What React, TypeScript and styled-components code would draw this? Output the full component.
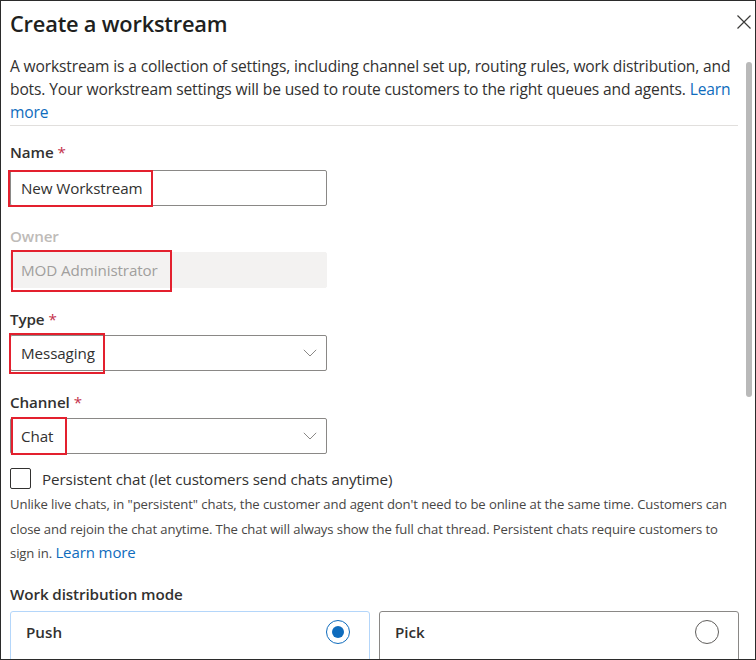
import React from "react";
import styled, { createGlobalStyle } from "styled-components";

const Global = createGlobalStyle`
  html, body { margin: 0; padding: 0; background: #fff; }
  body { font-family: "Open Sans", "Noto Sans", Arial, sans-serif; color: #323130; }
  * { box-sizing: border-box; }
`;

const Frame = styled.div`
  position: relative;
  width: 756px;
  height: 660px;
  border: 1px solid #2b2b2b;
  overflow: hidden;
  background: #fff;
`;

const Content = styled.div`
  display: flex;
  flex-direction: column;
  padding: 6px 17px 0 9px;
`;

const Header = styled.div`
  display: flex;
  align-items: center;
  justify-content: space-between;
  height: 32px;
`;

const Title = styled.h1`
  margin: 0;
  font-size: 21.8px;
  font-weight: 600;
  color: #201f1e;
  letter-spacing: -0.2px;
`;

const Close = styled.button`
  position: absolute;
  right: 3px;
  top: 13px;
  width: 16px;
  height: 16px;
  border: none;
  background: none;
  padding: 0;
  display: flex;
`;

const Desc = styled.p`
  margin: 16px 0 0;
  font-size: 15.6px;
  line-height: 23px;
  color: #323130;
  letter-spacing: -0.15px;
`;

const Link = styled.a<{ $size?: number }>`
  color: #0f6cbd;
  text-decoration: none;
  ${(p) => (p.$size ? `font-size: ${p.$size}px; line-height: 1;` : "")}
`;

const Divider = styled.hr`
  margin: 0;
  border: none;
  border-top: 1px solid #e1dfdd;
  margin-top: 1px;
`;

const Field = styled.div<{ $top: number }>`
  display: flex;
  flex-direction: column;
  margin-top: ${(p) => p.$top}px;
`;

const Label = styled.label<{ $disabled?: boolean; $gap?: number }>`
  font-size: 15.2px;
  line-height: 20px;
  font-weight: 600;
  color: ${(p) => (p.$disabled ? "#bebbb8" : "#323130")};
  margin-bottom: ${(p) => p.$gap ?? 6}px;
  letter-spacing: -0.1px;
`;

const Req = styled.span`
  color: #c4314b;
  font-weight: 400;
  margin-left: 4px;
`;

const Box = styled.div<{ $disabled?: boolean }>`
  position: relative;
  width: 317px;
  height: 36px;
  border: 1px solid ${(p) => (p.$disabled ? "#f3f2f1" : "#8a8886")};
  background: ${(p) => (p.$disabled ? "#f3f2f1" : "#fff")};
  border-radius: 2px;
  display: flex;
  align-items: center;
  justify-content: space-between;
  padding: 0 8px 0 10px;
  font-size: 15.2px;
  color: ${(p) => (p.$disabled ? "#a19f9d" : "#323130")};
  letter-spacing: -0.1px;
`;

const Highlight = styled.div<{ $l: number; $t: number; $w: number; $h: number }>`
  position: absolute;
  left: ${(p) => p.$l}px;
  top: ${(p) => p.$t}px;
  width: ${(p) => p.$w}px;
  height: ${(p) => p.$h}px;
  border: 2px solid #e3202e;
  pointer-events: none;
`;

const CheckRow = styled.div`
  display: flex;
  align-items: center;
  gap: 11px;
  margin-top: 14px;
`;

const CheckBox = styled.span`
  width: 21px;
  height: 21px;
  border: 1px solid #323130;
  border-radius: 2px;
  display: inline-block;
`;

const CheckLabel = styled.span`
  font-size: 15.2px;
  color: #323130;
  letter-spacing: -0.1px;
`;

const Help = styled.p`
  margin: 3px 0 0;
  font-size: 13.1px;
  line-height: 24.5px;
  color: #484644;
  letter-spacing: -0.1px;
`;

const SectionLabel = styled.div`
  margin-top: 18px;
  font-size: 15.2px;
  line-height: 20px;
  font-weight: 600;
  color: #323130;
  letter-spacing: -0.1px;
`;

const Cards = styled.div`
  display: grid;
  grid-template-columns: 360px 360px;
  gap: 9px;
  margin-top: 7px;
`;

const Card = styled.div<{ $selected?: boolean }>`
  height: 60px;
  border: 1px solid ${(p) => (p.$selected ? "#b4d6fa" : "#8a8886")};
  border-radius: 3px;
  display: flex;
  align-items: flex-start;
  justify-content: space-between;
  padding: 8px 19px 0 15px;
`;

const CardTitle = styled.span`
  font-size: 15.2px;
  font-weight: 600;
  line-height: 24px;
  color: #323130;
`;

const Radio = styled.span<{ $on?: boolean }>`
  width: 24px;
  height: 24px;
  border-radius: 50%;
  border: 1px solid ${(p) => (p.$on ? "#0f6cbd" : "#605e5c")};
  display: flex;
  align-items: center;
  justify-content: center;
  &::after {
    content: "";
    width: 12px;
    height: 12px;
    border-radius: 50%;
    background: ${(p) => (p.$on ? "#0f6cbd" : "transparent")};
  }
`;

const Scroll = styled.div`
  position: absolute;
  right: 3px;
  top: 61px;
  width: 6px;
  height: 335px;
  border-radius: 3px;
  background: #b9b9b9;
`;

const Chevron = () => (
  <svg width="14" height="8" viewBox="0 0 14 8" fill="none" style={{ marginRight: 1 }}>
    <path d="M0.8 0.8 L7 7 L13.2 0.8" stroke="#8a8886" strokeWidth="1" />
  </svg>
);

export default function App() {
  return (
    <>
      <Global />
      <Frame>
        <Close aria-label="Close">
          <svg width="16" height="16" viewBox="0 0 16 16">
            <path d="M1.5 1.5 L14.5 14.5 M14.5 1.5 L1.5 14.5" stroke="#3b3a39" strokeWidth="1.2" />
          </svg>
        </Close>
        <Scroll />
        <Content>
          <Header>
            <Title>Create a workstream</Title>
          </Header>
          <Desc>
            A workstream is a collection of settings, including channel set up, routing rules, work distribution, and
            bots. Your workstream settings will be used to route customers to the right queues and agents.{" "}
            <Link href="#">Learn more</Link>
          </Desc>
          <Divider />

          <Field $top={16}>
            <Label $gap={8}>
              Name<Req>*</Req>
            </Label>
            <Box>
              New Workstream
              <Highlight $l={-3} $t={-1} $w={145} $h={37} />
            </Box>
          </Field>

          <Field $top={20}>
            <Label $disabled>Owner</Label>
            <Box $disabled>
              MOD Administrator
              <Highlight $l={0} $t={-3} $w={161} $h={42} />
            </Box>
          </Field>

          <Field $top={21}>
            <Label>
              Type<Req>*</Req>
            </Label>
            <Box>
              Messaging
              <Chevron />
              <Highlight $l={-2} $t={-3} $w={96} $h={41} />
            </Box>
          </Field>

          <Field $top={21}>
            <Label>
              Channel<Req>*</Req>
            </Label>
            <Box>
              Chat
              <Chevron />
              <Highlight $l={0} $t={-2} $w={56} $h={38} />
            </Box>
          </Field>

          <CheckRow>
            <CheckBox />
            <CheckLabel>Persistent chat (let customers send chats anytime)</CheckLabel>
          </CheckRow>
          <Help>
            Unlike live chats, in "persistent" chats, the customer and agent don't need to be online at the same time.
            Customers can close and rejoin the chat anytime. The chat will always show the full chat thread. Persistent
            chats require customers to sign in.{" "}
            <Link href="#" $size={15}>
              Learn more
            </Link>
          </Help>

          <SectionLabel>Work distribution mode</SectionLabel>
          <Cards>
            <Card $selected>
              <CardTitle>Push</CardTitle>
              <Radio $on />
            </Card>
            <Card>
              <CardTitle>Pick</CardTitle>
              <Radio />
            </Card>
          </Cards>
        </Content>
      </Frame>
    </>
  );
}
